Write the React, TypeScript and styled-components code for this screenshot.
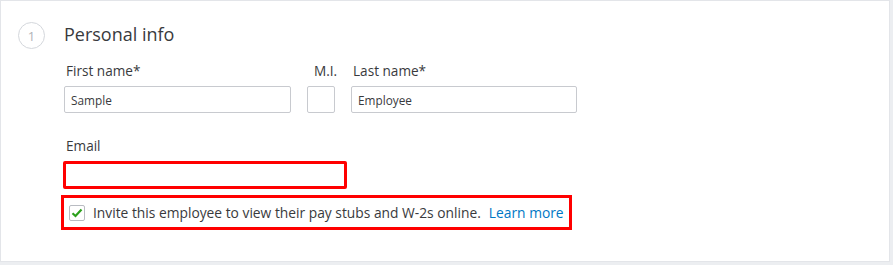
import React from "react";
import styled, { createGlobalStyle } from "styled-components";

const GlobalStyle = createGlobalStyle`
  html, body {
    margin: 0;
    padding: 0;
    background: #eceef1;
    font-family: "Open Sans", "Liberation Sans", sans-serif;
    color: #393a3d;
  }
`;

const Page = styled.div`
  width: 893px;
  height: 265px;
  box-sizing: border-box;
  padding: 0 3px 3px 0;
`;

const Card = styled.div`
  box-sizing: border-box;
  height: 262px;
  background: #fff;
  border: 1px solid #e3e5e9;
  display: flex;
  gap: 19px;
  padding: 21px 0 0 17px;
`;

const StepBadge = styled.div`
  width: 27px;
  height: 27px;
  box-sizing: border-box;
  border: 1px solid #d4d7dc;
  border-radius: 50%;
  display: flex;
  align-items: center;
  justify-content: center;
  font-size: 13px;
  color: #b0b3b8;
  flex-shrink: 0;
`;

const Content = styled.div`
  display: flex;
  flex-direction: column;
`;

const Title = styled.h2`
  margin: 0;
  font-size: 18px;
  font-weight: 400;
  line-height: 24px;
  color: #393a3d;
`;

const Row = styled.div`
  display: flex;
  gap: 16px;
  margin-top: 16px;
`;

const Field = styled.div<{ $width: number }>`
  display: flex;
  flex-direction: column;
  width: ${(p) => p.$width}px;
`;

const Label = styled.label<{ $indent?: number }>`
  font-size: 13.6px;
  line-height: 18px;
  color: #393a3d;
  padding-left: ${(p) => p.$indent ?? 2}px;
  margin-bottom: 6px;
  white-space: nowrap;
`;

const Input = styled.input<{ $alert?: boolean }>`
  box-sizing: border-box;
  height: ${(p) => (p.$alert ? 28 : 27)}px;
  width: 100%;
  border: ${(p) => (p.$alert ? "3px solid #ff0000" : "1px solid #c8cacf")};
  border-radius: 2px;
  padding: 0 6px;
  font-family: "Open Sans", "Liberation Sans", sans-serif;
  font-size: 11.8px;
  color: #393a3d;
  outline: none;
`;

const EmailField = styled(Field)`
  margin-top: 24px;
  margin-left: -1px;
`;

const InviteBox = styled.div`
  box-sizing: border-box;
  margin-top: 6px;
  margin-left: -3px;
  width: 511px;
  height: 35px;
  border: 3px solid #ff0000;
  display: flex;
  align-items: center;
  padding-left: 5px;
  gap: 8px;
  font-size: 13.8px;
  color: #393a3d;
  white-space: nowrap;
`;

const Check = styled.span`
  width: 16px;
  height: 16px;
  box-sizing: border-box;
  border: 1px solid #b9bcc2;
  border-radius: 2px;
  display: flex;
  align-items: center;
  justify-content: center;
  background: #fff;
  flex-shrink: 0;
`;

const Link = styled.a`
  color: #0077c5;
  text-decoration: none;
  margin-left: 8px;
`;

export default function App() {
  return (
    <>
      <GlobalStyle />
      <Page>
        <Card>
          <StepBadge>1</StepBadge>
          <Content>
            <Title>Personal info</Title>
            <Row>
              <Field $width={227}>
                <Label>First name*</Label>
                <Input defaultValue="Sample" />
              </Field>
              <Field $width={28}>
                <Label $indent={7}>M.I.</Label>
                <Input />
              </Field>
              <Field $width={226}>
                <Label>Last name*</Label>
                <Input defaultValue="Employee" />
              </Field>
            </Row>
            <EmailField $width={284}>
              <Label $indent={3}>Email</Label>
              <Input $alert />
            </EmailField>
            <InviteBox>
              <Check>
                <svg width="12" height="10" viewBox="0 0 12 10">
                  <path d="M1.5 5.2 L4.5 8 L10.5 1.5" fill="none" stroke="#2ca01c" strokeWidth="2.2" />
                </svg>
              </Check>
              <span>
                Invite this employee to view their pay stubs and W-2s online.
                <Link href="#">Learn more</Link>
              </span>
            </InviteBox>
          </Content>
        </Card>
      </Page>
    </>
  );
}
